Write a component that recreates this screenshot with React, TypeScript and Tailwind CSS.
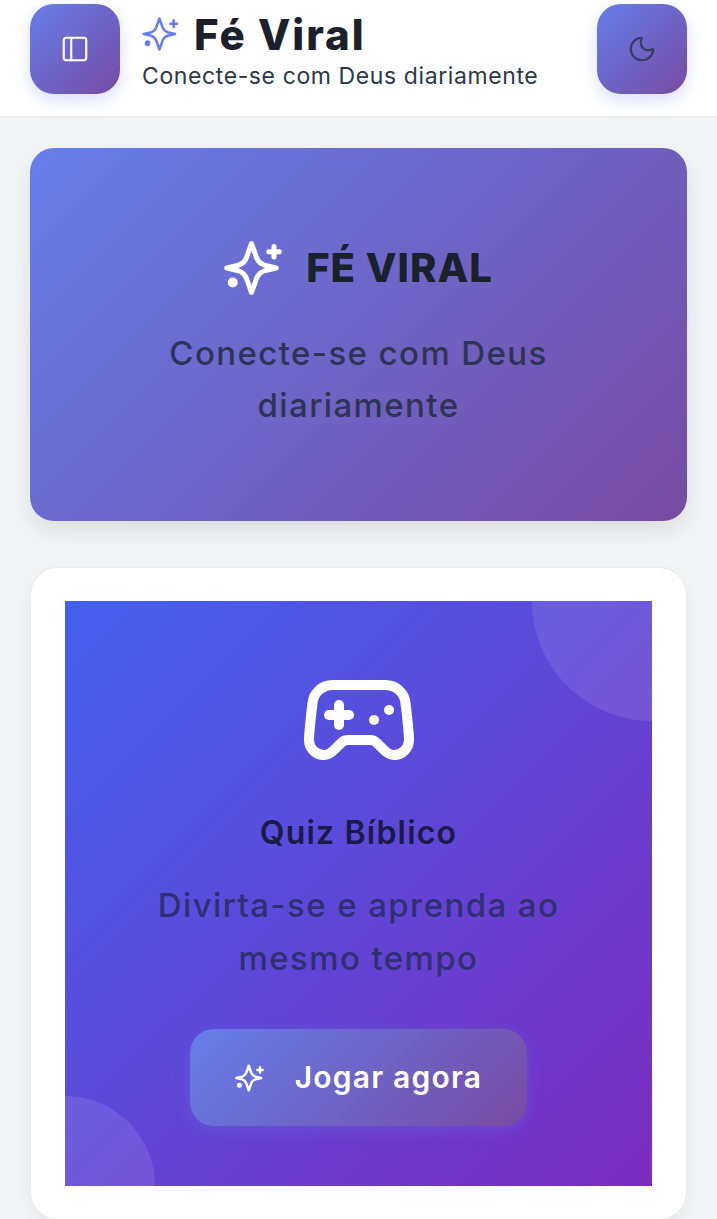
import React from 'react';
import { Gamepad2, Moon, PanelLeft } from 'lucide-react';

// four point star with the small plus and the dot, lucide's Sparkles is too round for this one
const StarIcon: React.FC<{ className?: string; strokeWidth?: number }> = ({ className, strokeWidth = 2 }) => (
  <svg viewBox="0 0 24 24" fill="none" stroke="currentColor" strokeWidth={strokeWidth} strokeLinecap="round" strokeLinejoin="round" className={className}>
    <path d="M11 2.2 L13 7.8 Q13.9 10.1 16.2 10.9 L20.9 12 L16.2 13.1 Q13.9 13.9 13 16.2 L11 21.8 L9 16.2 Q8.1 13.9 5.8 13.1 L1.1 12 L5.8 10.9 Q8.1 10.1 9 7.8 Z" />
    <path d="M20 3.4v4.2M17.9 5.5h4.2" />
    <circle cx="3.5" cy="17.8" r="1" fill="currentColor" />
  </svg>
);

const App: React.FC = () => {
  return (
    <div className="h-[1219px] overflow-hidden bg-[#f4f5f7] font-['Inter',sans-serif]">
      {/* Header */}
      <header className="flex h-[117px] items-start justify-between border-b border-[#e8eaee] bg-white px-[30px] pt-1 shadow-[0_1px_3px_rgba(0,0,0,0.04)]">
        <div className="flex gap-[22px]">
          <button className="flex h-[90px] w-[90px] items-center justify-center rounded-[24px] bg-[linear-gradient(135deg,#667eea,#764ba2)] text-white shadow-[0_6px_16px_rgba(102,126,234,0.25)]">
            <PanelLeft className="h-[30px] w-[30px]" strokeWidth={1.7} />
          </button>
          <div>
            <div className="flex h-[60px] items-center gap-[14px]">
              <StarIcon className="h-[38px] w-[38px] text-[#667eea]" strokeWidth={1.6} />
              <h1 className="text-[42px] font-extrabold tracking-[2px] text-[#1a202c]">Fé Viral</h1>
            </div>
            <p className="text-[23px] leading-[24px] tracking-[0.6px] text-[#2d3748]">Conecte-se com Deus diariamente</p>
          </div>
        </div>
        <button className="flex h-[90px] w-[90px] items-center justify-center rounded-[24px] bg-[linear-gradient(135deg,#667eea,#764ba2)] text-[#363a66] shadow-[0_6px_16px_rgba(102,126,234,0.25)]">
          <Moon className="h-[30px] w-[30px]" strokeWidth={1.7} />
        </button>
      </header>

      <main className="flex flex-col gap-[46px] px-[30px] pt-[31px]">
        {/* Hero */}
        <section className="flex h-[373px] flex-col items-center justify-center rounded-[24px] bg-[linear-gradient(135deg,#667eea,#764ba2)] px-[40px] shadow-[0_10px_24px_rgba(0,0,0,0.1)]">
          <div className="flex items-center gap-[22px]">
            <StarIcon className="h-[60px] w-[60px] text-white" strokeWidth={2} />
            <h2 className="text-[40px] font-extrabold tracking-[1px] text-[#1a202c]">FÉ VIRAL</h2>
          </div>
          <p className="mt-[29px] w-[440px] text-center text-[33px] font-medium leading-[52px] tracking-[1.4px] text-[#2f3358]">
            Conecte-se com Deus diariamente
          </p>
        </section>

        {/* Quiz card */}
        <section className="rounded-[28px] border border-[#e8eaee] bg-white px-[34px] pb-[33px] pt-[33px] shadow-[0_6px_20px_rgba(0,0,0,0.06)]">
          <div className="relative flex h-[585px] flex-col items-center overflow-hidden bg-[linear-gradient(135deg,#4361ee,#7b2cbf)]">
            <div className="absolute right-[-120px] top-[-120px] h-[240px] w-[240px] rounded-full bg-white/10" />
            <div className="absolute bottom-[-90px] left-[-90px] h-[180px] w-[180px] rounded-full bg-white/10" />
            <Gamepad2 className="relative mt-[59px] h-[120px] w-[120px] text-white" strokeWidth={2} />
            <h3 className="relative mt-[29px] text-[32px] font-semibold leading-[48px] tracking-[1.2px] text-[#1a1a4b]">Quiz Bíblico</h3>
            <p className="relative mt-[22px] w-[460px] text-center text-[33px] font-medium leading-[53px] tracking-[1.4px] text-[#2f2f73]">
              Divirta-se e aprenda ao mesmo tempo
            </p>
            <button className="relative mt-[44px] flex h-[97px] w-[337px] items-center justify-center gap-[30px] rounded-[24px] bg-[linear-gradient(135deg,#667eea,#764ba2)] text-[30px] font-semibold tracking-[1.2px] text-white shadow-[0_4px_16px_rgba(102,126,234,0.3)]">
              <StarIcon className="h-[30px] w-[30px]" strokeWidth={2} />
              Jogar agora
            </button>
          </div>
        </section>
      </main>
    </div>
  );
};

export default App;
